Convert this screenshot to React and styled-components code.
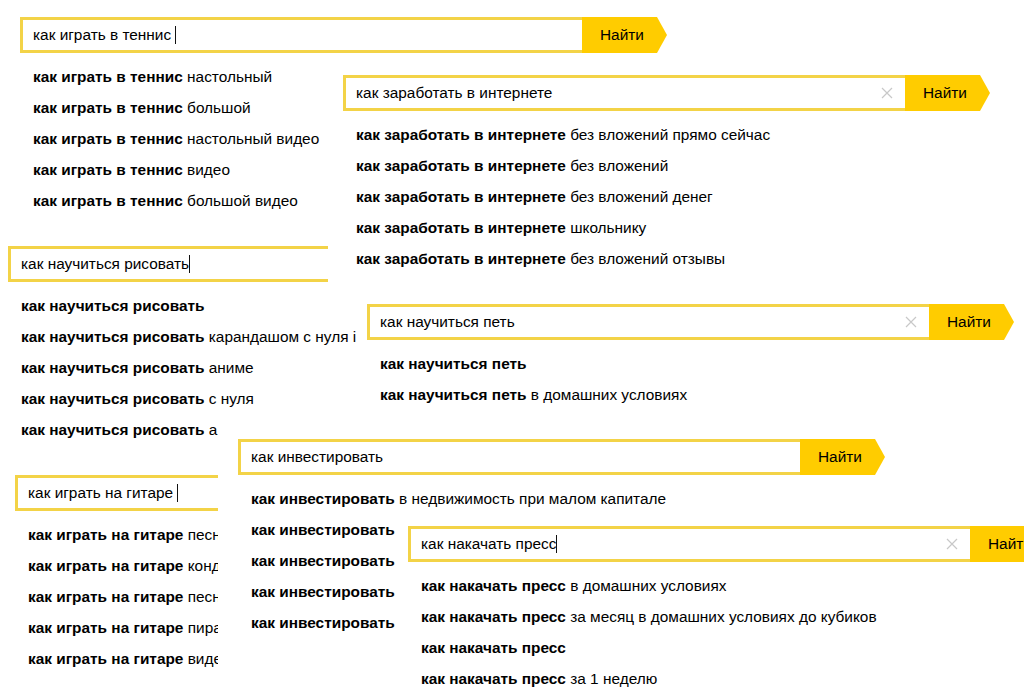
import React from "react";
import styled, { createGlobalStyle } from "styled-components";

const Global = createGlobalStyle`
  html, body {
    margin: 0;
    padding: 0;
    background: #fff;
    overflow: hidden;
  }
  body {
    width: 1024px;
    height: 695px;
    font-family: "Liberation Sans", Arial, sans-serif;
    color: #000;
  }
`;

const Canvas = styled.div`
  position: relative;
  width: 1024px;
  height: 695px;
  overflow: hidden;
  background: #fff;
`;

// each screenshot fragment lies on the canvas like a pasted clipping
const Card = styled.div`
  position: absolute;
  left: ${(p) => p.$x - p.$padL}px;
  top: ${(p) => p.$y - p.$padT}px;
  padding: ${(p) => p.$padT}px 12px 10px ${(p) => p.$padL}px;
  min-height: ${(p) => p.$minH || 0}px;
  width: ${(p) => (p.$clipW ? `${p.$clipW}px` : "auto")};
  overflow: ${(p) => (p.$clipW ? "hidden" : "visible")};
  background: #fff;
  box-sizing: border-box;
`;

const SearchRow = styled.div`
  display: flex;
  width: 647px;
  height: 36px;
`;

const Box = styled.div`
  flex: none;
  width: 562px;
  height: 36px;
  box-sizing: border-box;
  border: 3px solid #f3d347;
  border-right: none;
  display: flex;
  align-items: center;
  padding: 0 10px;
  font-size: 15.4px;
  background: #fff;
`;

const Query = styled.span`
  flex: 1;
  white-space: pre;
  display: flex;
  align-items: center;
`;

const Cursor = styled.span`
  display: inline-block;
  width: 1px;
  height: 18px;
  background: #111;
`;

const Clear = styled.svg`
  width: 12px;
  height: 12px;
  margin-right: 2px;
`;

const Button = styled.div`
  flex: none;
  width: 85px;
  height: 36px;
  background: #ffcc00;
  clip-path: polygon(0 0, 75px 0, 85px 50%, 75px 100%, 0 100%);
  display: flex;
  align-items: center;
  padding-left: 18px;
  box-sizing: border-box;
  font-size: 15.4px;
`;

const List = styled.ul`
  list-style: none;
  margin: 0;
  padding: 8px 0 0 13px;
`;

const Row = styled.li`
  height: 31px;
  line-height: 31px;
  font-size: 15.4px;
  white-space: nowrap;
`;

const Bold = styled.b`
  font-weight: 700;
`;

const cards = [
  {
    x: 20, y: 17, padL: 10, padT: 10,
    query: "как играть в теннис ", cursor: true,
    bold: "как играть в теннис",
    rest: ["настольный", "большой", "настольный видео", "видео", "большой видео"],
  },
  {
    x: 8, y: 246, padL: 8, padT: 10, clipW: 358, noButton: true,
    query: "как научиться рисовать", cursor: true,
    bold: "как научиться рисовать",
    rest: ["", "карандашом с нуля і", "аниме", "с нуля", "а"],
  },
  {
    x: 343, y: 75, padL: 15, padT: 10, clear: true,
    query: "как заработать в интернете",
    bold: "как заработать в интернете",
    rest: ["без вложений прямо сейчас", "без вложений", "без вложений денег", "школьнику", "без вложений отзывы"],
  },
  {
    x: 15, y: 475, padL: 10, padT: 10, clipW: 213, noButton: true,
    query: "как играть на гитаре ", cursor: true,
    bold: "как играть на гитаре",
    rest: ["песн", "конд", "песн", "пира", "виде"],
  },
  {
    x: 367, y: 304, padL: 9, padT: 9, clear: true,
    query: "как научиться петь",
    bold: "как научиться петь",
    rest: ["", "в домашних условиях"],
  },
  {
    x: 238, y: 439, padL: 20, padT: 9, minH: 270,
    query: "как инвестировать",
    bold: "как инвестировать",
    rest: ["в недвижимость при малом капитале", "", "", "", ""],
  },
  {
    x: 408, y: 526, padL: 8, padT: 11, minH: 200, clear: true, cursor: true,
    query: "как накачать пресс",
    bold: "как накачать пресс",
    rest: ["в домашних условиях", "за месяц в домашних условиях до кубиков", "", "за 1 неделю"],
  },
];

const SearchCard = ({ c }) => (
  <Card $x={c.x} $y={c.y} $padL={c.padL} $padT={c.padT} $minH={c.minH} $clipW={c.clipW}>
    <SearchRow>
      <Box>
        <Query>
          {c.query}
          {c.cursor && <Cursor />}
        </Query>
        {c.clear && (
          <Clear viewBox="0 0 12 12">
            <path d="M1 1L11 11M11 1L1 11" stroke="#c8c8c8" strokeWidth="1.2" />
          </Clear>
        )}
      </Box>
      {!c.noButton && <Button>Найти</Button>}
    </SearchRow>
    <List>
      {c.rest.map((r, i) => (
        <Row key={i}>
          <Bold>{c.bold}</Bold>
          {r ? ` ${r}` : ""}
        </Row>
      ))}
    </List>
  </Card>
);

export default function App() {
  return (
    <>
      <Global />
      <Canvas>
        {cards.map((c, i) => (
          <SearchCard key={i} c={c} />
        ))}
      </Canvas>
    </>
  );
}
